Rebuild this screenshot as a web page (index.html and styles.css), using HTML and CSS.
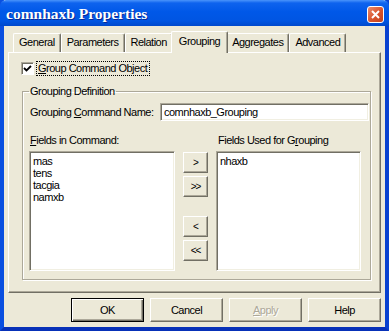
FILE: index.html
```html
<!DOCTYPE html>
<html>

<head>
    <title>comnhaxb Properties</title>
    <link rel="stylesheet" href="styles.css">
</head>

<body>
    <div class="window">
        <div class="titlebar">
            <span class="title">comnhaxb Properties</span>
            <span class="close">
                <svg width="9" height="9" viewBox="0 0 9 9">
                    <path d="M1 1 L8 8 M8 1 L1 8" stroke="#fff" stroke-width="2" fill="none" />
                </svg>
            </span>
        </div>
        <div class="client">
            <div class="tabs">
                <span class="tab">General</span>
                <span class="tab">Parameters</span>
                <span class="tab">Relation</span>
                <span class="tab active">Grouping</span>
                <span class="tab">Aggregates</span>
                <span class="tab">Advanced</span>
            </div>
            <div class="panel">
                <div class="checkRow">
                    <span class="checkbox">
                        <svg width="9" height="9" viewBox="0 0 9 9">
                            <path d="M1 4 L3.5 6.5 L8 2" stroke="#000" stroke-width="1.8" fill="none" />
                        </svg>
                    </span>
                    <span class="focusLbl"><u>G</u>roup Command Object</span>
                </div>
                <fieldset class="groupBox">
                    <legend>Grouping Definition</legend>
                    <div class="nameRow">
                        <label>Grouping <u>C</u>ommand Name:</label>
                        <input class="textInput" type="text" value="comnhaxb_Grouping" spellcheck="false">
                    </div>
                    <div class="fieldsGrid">
                        <label class="colLbl"><u>F</u>ields in Command:</label>
                        <span></span>
                        <label class="colLbl rightLbl">Fields Used for G<u>r</u>ouping</label>
                        <div class="listBox">
                            <div>mas</div>
                            <div>tens</div>
                            <div>tacgia</div>
                            <div>namxb</div>
                        </div>
                        <div class="movers">
                            <button class="btn small" type="button">&gt;</button>
                            <button class="btn small" type="button">&gt;&gt;</button>
                            <button class="btn small spaced" type="button">&lt;</button>
                            <button class="btn small" type="button">&lt;&lt;</button>
                        </div>
                        <div class="listBox">
                            <div>nhaxb</div>
                        </div>
                    </div>
                </fieldset>
            </div>
            <div class="dialogButtons">
                <button class="btn big default" type="button">OK</button>
                <button class="btn big" type="button">Cancel</button>
                <button class="btn big disabled" type="button"><u>A</u>pply</button>
                <button class="btn big" type="button">Help</button>
            </div>
        </div>
    </div>
</body>

</html>
```

FILE: styles.css
```css
* {
    box-sizing: border-box;
}

body {
    margin: 0;
    font-family: "Liberation Sans", Arial, sans-serif;
    font-size: 11px;
    letter-spacing: -0.5px;
    color: #000;
}

.window {
    width: 389px;
    height: 331px;
    background: #ece9d8;
    border: 4px solid #0841d0;
    border-top: none;
    border-left-color: #0a4fe0;
    border-bottom-color: #0831b8;
    display: flex;
    flex-direction: column;
}

.titlebar {
    height: 26px;
    margin: 0 -4px;
    padding: 0 5px 0 6px;
    display: flex;
    align-items: center;
    justify-content: space-between;
    background: linear-gradient(to bottom, #4a94fb 0, #0e63ee 3px, #0058e8 45%, #0055e2 80%, #0049cc 100%);
    border-radius: 6px 6px 0 0;
}

.title {
    font-family: "Liberation Serif", "Times New Roman", serif;
    font-weight: bold;
    font-size: 15.5px;
    letter-spacing: 0;
    color: #fff;
    text-shadow: 1px 1px 0 #0b2a94;
    padding-top: 1px;
}

.close {
    width: 17px;
    height: 17px;
    border: 1px solid #fff;
    border-radius: 3px;
    background: linear-gradient(135deg, #ea8c6c, #d8532c 55%, #c2421f);
    display: flex;
    align-items: center;
    justify-content: center;
    margin-top: 3px;
}

.client {
    flex: 1;
    padding: 5px 4px 0 4px;
}

/* tab strip */
.tabs {
    display: flex;
    align-items: flex-end;
    height: 21px;
    padding-left: 5px;
}

.tab {
    height: 19px;
    line-height: 17px;
    padding: 0 5px;
    border-top: 1px solid #fff;
    border-left: 1px solid #fff;
    border-right: 1px solid #716f64;
    box-shadow: inset -1px 0 0 #aca899;
    border-radius: 2px 2px 0 0;
}

.tab.active {
    height: 22px;
    line-height: 19px;
    margin: 0 -2px -1px;
    padding: 0 7px;
    background: #ece9d8;
    position: relative;
    z-index: 1;
}

.panel {
    height: 241px;
    border: 1px solid #fff;
    border-right-color: #716f64;
    border-bottom-color: #716f64;
    box-shadow: inset -1px -1px 0 #aca899;
    padding: 8px 0 0 12px;
}

.checkRow {
    display: flex;
    align-items: center;
    height: 15px;
}

.checkbox {
    width: 13px;
    height: 13px;
    background: #fff;
    border: 1px solid;
    border-color: #aca899 #fff #fff #aca899;
    box-shadow: inset 1px 1px 0 #716f64;
    display: flex;
    align-items: center;
    justify-content: center;
    margin-right: 2px;
}

.focusLbl {
    border: 1px dotted #000;
    padding: 0 2px 0 1px;
    line-height: 13px;
}

.groupBox {
    width: 349px;
    margin: 9px 0 0 1px;
    padding: 5px 8px 8px 6px;
    border: 1px solid #aca899;
    box-shadow: 1px 1px 0 #fff, inset 1px 1px 0 #fff;
}

.groupBox legend {
    padding: 0 1px;
    line-height: 13px;
}

.nameRow {
    display: flex;
    align-items: center;
    height: 18px;
    margin-right: -7px;
}

.nameRow label {
    width: 131px;
    padding-left: 1px;
}

.textInput {
    flex: 1;
    height: 18px;
    font: inherit;
    letter-spacing: inherit;
    padding: 0 3px;
    background: #fff;
    border: 1px solid;
    border-color: #aca899 #fff #fff #aca899;
    box-shadow: inset 1px 1px 0 #716f64, inset -1px -1px 0 #f1efe2;
    outline: none;
}

.fieldsGrid {
    display: grid;
    grid-template-columns: 146px 25px 145px;
    column-gap: 8px;
    margin-top: 13px;
}

.colLbl {
    line-height: 13px;
    margin-bottom: 4px;
    padding-left: 1px;
}

.rightLbl {
    padding-left: 2px;
}

.listBox {
    height: 120px;
    background: #fff;
    border: 1px solid;
    border-color: #aca899 #fff #fff #aca899;
    box-shadow: inset 1px 1px 0 #716f64, inset -1px -1px 0 #f1efe2;
    padding: 3px 3px;
    line-height: 12px;
}

.movers {
    display: flex;
    flex-direction: column;
    gap: 3px;
    padding-top: 1px;
}

/* classic 3d buttons */
.btn {
    font: inherit;
    letter-spacing: inherit;
    color: #000;
    background: #ece9d8;
    border: 1px solid;
    border-color: #fff #716f64 #716f64 #fff;
    box-shadow: inset -1px -1px 0 #aca899;
    padding: 0;
}

.btn.small {
    height: 21px;
    font-size: 10px;
    letter-spacing: -1px;
}

.btn.small.spaced {
    margin-top: 16px;
}

.dialogButtons {
    display: flex;
    justify-content: flex-end;
    gap: 6px;
    margin-top: 5px;
}

.btn.big {
    width: 73px;
    height: 24px;
}

.btn.default {
    outline: 1px solid #000;
    outline-offset: -1px;
    border-color: #000;
    box-shadow: inset 1px 1px 0 #fff, inset -1px -1px 0 #716f64, inset -2px -2px 0 #aca899;
}

.btn.disabled {
    color: #aca899;
    text-shadow: 1px 1px 0 #fff;
}
```
